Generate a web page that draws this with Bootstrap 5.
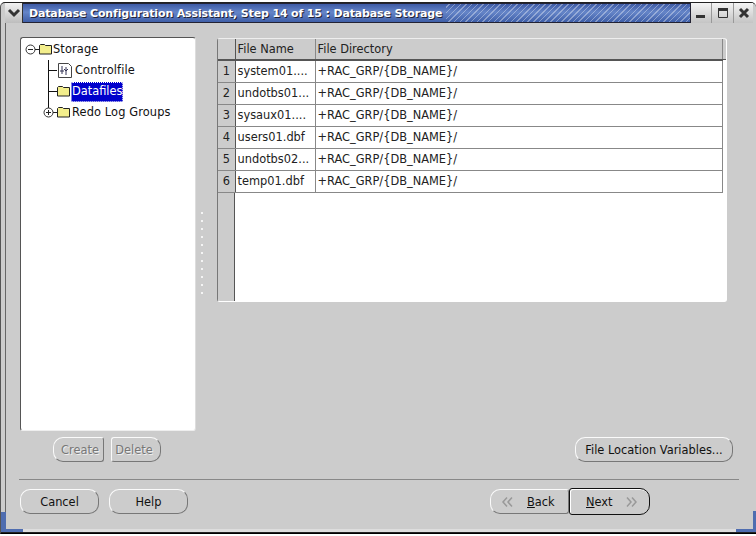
<!DOCTYPE html>
<html lang="en"><head><meta charset="utf-8"><title>Database Storage</title>
<link href="https://cdn.jsdelivr.net/npm/bootstrap@5.3.0/dist/css/bootstrap.min.css" rel="stylesheet">
<style>
html,body{height:536px;overflow:hidden;background:#fff}
body{font-family:"DejaVu Sans",sans-serif;font-size:11.4px;color:#000}
.win{width:756px;height:532px;margin-top:2px;background:#ccc;position:relative;border:1px solid #000;border-radius:5px 5px 0 0;border-top-color:#222;border-left-color:#555;border-right:0}
.tbar{height:20px;margin:0 0 0 4px}
.tmenu{width:18px;background:linear-gradient(#f2f2f2,#bdbdbd);border-right:1px solid #333}
.ttitle{width:668px;background:linear-gradient(#3d5aa5,#6585c8 45%,#3f5fa8);border:1px solid #223;border-width:1px 1px 1px 0;color:#fff;font-weight:700;font-size:11px;padding-left:6px;line-height:20px;white-space:nowrap;letter-spacing:-.15px;text-shadow:1px 1px 0 #223}
.thatch{background:repeating-linear-gradient(135deg,transparent 0 2px,rgba(255,255,255,.35) 2px 3px,transparent 3px 4px)}
.tbtn{background:linear-gradient(#f4f4f4,#c4c4c4);border-right:1px solid #999}
.wpad{padding:14px 0 0 14px;margin-left:4px;border-left:1px solid #666;height:506px}
.tree{width:176px;height:394px;padding-top:1px;background:#fff;border:1px solid;border-color:#555 #ddd #eee #555;border-radius:3px}
.trow{height:21px;line-height:21px;white-space:nowrap;color:#111;letter-spacing:.12px}
.trow svg{display:block;flex:none}
.sel{background:#00c;color:#fff;outline:1px dotted #fff;outline-offset:-1px;border-radius:2px;height:20px;margin-top:1px;line-height:19px;padding:0 1px;letter-spacing:0}
.gbtn.btn{--bs-btn-padding-y:0;font-size:11.4px;line-height:22px;height:25px;padding:0;background:#ccc;color:#111;border:1px solid;border-color:#fafafa #777 #777 #fafafa;border-radius:10px}
.dim.btn{color:#777;opacity:1;text-shadow:1px 1px 0 #eee}
.rr.btn{border-radius:3px 10px 10px 3px}
.rl.btn{border-radius:10px 3px 3px 10px}
.grip{width:21px;padding-top:175px}
.grip i{display:block;width:2px;height:2px;background:#f4f4f4;margin:0 0 6px 5px}
.tablewrap{width:510px;height:264px;margin-top:1px;border:1px solid;border-color:#eee #fff #fff #777;border-radius:3px;background:#fff;position:relative;overflow:hidden}
.rail{position:absolute;left:0;top:0;bottom:0;width:17px;background:#ccc;border-right:1px solid #555}
.topfill{position:absolute;right:0;top:0;width:5px;height:21px;background:#ccc;border-bottom:1px solid #555}
.dbt.table{position:relative;width:505px;table-layout:fixed;margin:0;--bs-table-bg:transparent;font-size:11.4px;border-collapse:collapse}
.dbt.table th,.dbt.table td{padding:0 0 0 2px;height:22px;line-height:20px;font-weight:400;border:1px solid #888;border-width:0 1px 1px 0;color:#222;white-space:nowrap;overflow:hidden;box-shadow:none;background:#fff}
.dbt.table thead th{height:21px;background:#ccc;border-bottom:2px solid #555}
.dbt.table td.rh,.dbt.table th.rh{background:#ccc;text-align:center;padding:0;border-right:1px solid #555}
.lwr{margin:17px 0 0 -1px;border-top:1px solid #888;width:720px;opacity:1}
.corner{position:absolute;background:#4f6db0}
.u{text-decoration:underline}
.foot{position:absolute;left:0;right:0;bottom:0;height:4px;background:#ddd;border-bottom:1px solid #222}
</style></head><body>
<div class="win">
 <div class="foot"></div>
 <div class="corner" style="left:0;bottom:1px;width:5px;height:20px"></div>
 <div class="corner" style="left:0;bottom:1px;width:22px;height:3px"></div>
 <div class="corner" style="right:0;bottom:4px;width:3px;height:18px"></div>
 <div class="corner" style="right:0;bottom:1px;width:20px;height:3px"></div>
 <div class="tbar d-flex">
  <div class="tmenu d-flex align-items-center justify-content-center"><svg width="14" height="10" viewBox="0 0 14 10"><path d="M2 2l5 5 5-5" fill="none" stroke="#333" stroke-width="3"/></svg></div>
  <div class="ttitle d-flex"><span>Database Configuration Assistant, Step 14 of 15 : Database Storage</span><span class="thatch flex-grow-1 ms-1"></span></div>
  <div class="tbtn d-flex align-items-center justify-content-center" style="width:21px"><svg width="12" height="12" viewBox="0 0 12 12"><rect x="1" y="8" width="9" height="3" fill="#333"/></svg></div>
  <div class="tbtn d-flex align-items-center justify-content-center" style="width:22px"><svg width="12" height="12" viewBox="0 0 12 12"><path d="M1.500 1.500h9v9h-9z" fill="none" stroke="#333"/><rect x="1" y="1" width="10" height="3" fill="#333"/></svg></div>
  <div class="tbtn d-flex align-items-center justify-content-center" style="width:19px;border:0"><svg width="12" height="12" viewBox="0 0 12 12"><path d="M2 2l8 8M10 2l-8 8" stroke="#333" stroke-width="3"/></svg></div>
 </div>
 <div class="wpad">
  <div class="d-flex">
   <div class="tree">
    <div class="trow d-flex"><svg width="32" height="21" viewBox="0 0 32 21"><circle cx="9.500" cy="10.500" r="4.500" fill="#fff" stroke="#333"/><path d="M7 10.500h5M14 10.500h4" stroke="#222"/><path d="M18.500 6.500l1-1h4l1 1h6v8.500h-12z" fill="#f3ee8c" stroke="#222"/></svg><span>Storage</span></div>
    <div class="trow d-flex"><svg width="54" height="21" viewBox="0 0 54 21"><path d="M27.500 0v21M27 10.500h9" stroke="#111" fill="none"/><path d="M37.500 3.500h10l3 3v11h-13z" fill="#fff" stroke="#444"/><path d="M41 6v8M45 7v8M43 9l2 2 2-2M39 11h4" stroke="#335" fill="none"/></svg><span>Controlfile</span></div>
    <div class="trow d-flex"><svg width="50" height="21" viewBox="0 0 50 21"><path d="M27.500 0v21M27 10.500h9" stroke="#111" fill="none"/><path d="M36.500 6.500l1-1h4l1 1h6v8.500h-12z" fill="#f3ee8c" stroke="#222"/></svg><span class="sel">Datafiles</span></div>
    <div class="trow d-flex"><svg width="51" height="21" viewBox="0 0 51 21"><path d="M27.500 0v6" stroke="#111"/><circle cx="27.500" cy="10.500" r="4.500" fill="#fff" stroke="#333"/><path d="M25 10.500h5M27.500 8v5M32 10.500h4" stroke="#222"/><path d="M36.500 6.500l1-1h4l1 1h6v8.500h-12z" fill="#f3ee8c" stroke="#222"/></svg><span>Redo Log Groups</span></div>
   </div>
   <div class="grip"><i></i><i></i><i></i><i></i><i></i><i></i><i></i><i></i><i></i><i></i><i></i></div>
   <div class="tablewrap">
    <div class="rail"></div><div class="topfill"></div>
    <table class="dbt table">
     <colgroup><col style="width:17px"><col style="width:80px"><col></colgroup>
     <thead><tr><th class="rh"></th><th>File Name</th><th>File Directory</th></tr></thead>
     <tbody>
      <tr><td class="rh">1</td><td>system01....</td><td>+RAC_GRP/{DB_NAME}/</td></tr>
      <tr><td class="rh">2</td><td>undotbs01...</td><td>+RAC_GRP/{DB_NAME}/</td></tr>
      <tr><td class="rh">3</td><td>sysaux01....</td><td>+RAC_GRP/{DB_NAME}/</td></tr>
      <tr><td class="rh">4</td><td>users01.dbf</td><td>+RAC_GRP/{DB_NAME}/</td></tr>
      <tr><td class="rh">5</td><td>undotbs02...</td><td>+RAC_GRP/{DB_NAME}/</td></tr>
      <tr><td class="rh">6</td><td>temp01.dbf</td><td>+RAC_GRP/{DB_NAME}/</td></tr>
     </tbody>
    </table>
   </div>
  </div>
  <div class="d-flex mt-1" style="padding:2px 0 0 33px;width:713px">
   <button class="btn gbtn dim rl" style="width:51px;padding-left:3px" disabled>Create</button>
   <button class="btn gbtn dim rr" style="width:50px;margin-left:7px;padding-right:4px" disabled>Delete</button>
   <button class="btn gbtn ms-auto" style="width:158px">File Location Variables...</button>
  </div>
  <hr class="lwr">
  <div class="d-flex" style="margin:9px 0 0 0">
   <button class="btn gbtn" style="width:79px">Cancel</button>
   <button class="btn gbtn" style="width:79px;margin-left:10px">Help</button>
   <div class="d-flex" style="margin-left:302px">
    <button class="btn gbtn rl d-flex align-items-center" style="width:79px"><svg style="margin-left:10px" width="14" height="12" viewBox="0 0 14 12"><path d="M6 1.500l-4 4.500 4 4.500M11 1.500l-4 4.500 4 4.500" fill="none" stroke="#999" stroke-width="1.500"/></svg><span style="margin-left:12px"><span class="u">B</span>ack</span></button>
    <button class="btn gbtn rr d-flex align-items-center" style="width:81px;height:27px;margin-top:-1px;border:1px solid #111;box-shadow:inset 1px 1px 0 #fff"><span style="margin-left:16px"><span class="u">N</span>ext</span><svg style="margin-left:11px" width="14" height="12" viewBox="0 0 14 12"><path d="M3 1.500l4 4.500-4 4.500M8 1.500l4 4.500-4 4.500" fill="none" stroke="#999" stroke-width="1.500"/></svg></button>
   </div>
  </div>
 </div>
</div>
<script src="https://cdn.jsdelivr.net/npm/bootstrap@5.3.0/dist/js/bootstrap.bundle.min.js"></script>
</body></html>
